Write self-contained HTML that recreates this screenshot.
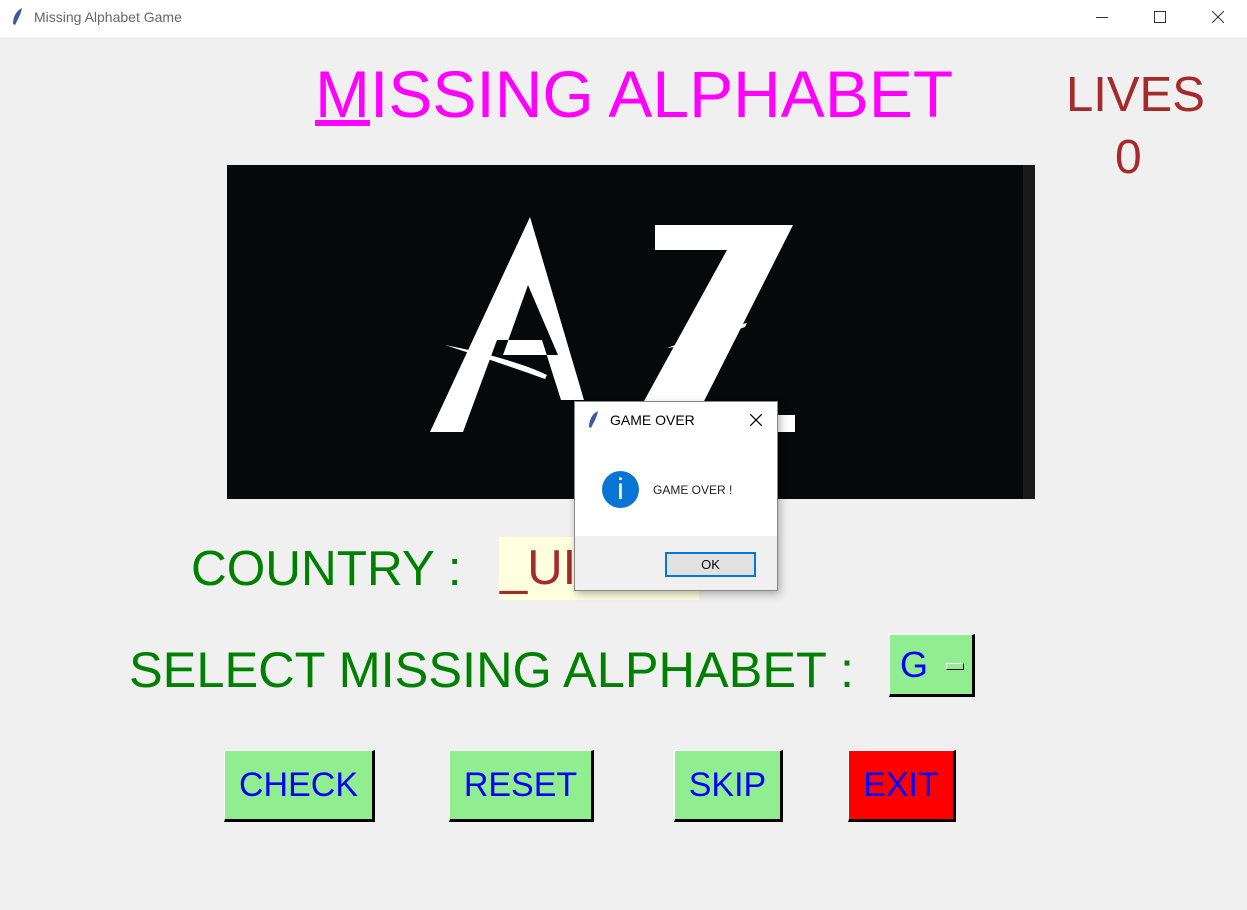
<!DOCTYPE html>
<html><head><style>
body{margin:0;width:1247px;height:910px;background:#f0f0f0;font-family:"Liberation Sans",sans-serif;position:relative;overflow:hidden}
.a{position:absolute;white-space:nowrap}
.btn{position:absolute;background:#90ee90;border:1px solid #fff;border-right:3px solid #000;border-bottom:3px solid #000;box-sizing:border-box;color:#0000ff;font-size:34px;display:flex;align-items:center;justify-content:center}
</style></head><body>
<div class="a" style="left:0;top:0;width:1247px;height:37px;background:#fff"></div>
<svg class="a" style="left:10px;top:7px" width="16" height="20"><path d="M12 1 C6 4 3 10 3 17 L5 18 C8 12 11 7 12 1Z" fill="#3a5a9a"/></svg>
<div class="a" style="left:34px;top:9px;font-size:14px;color:#666">Missing Alphabet Game</div>
<div class="a" style="left:1096px;top:17px;width:12px;height:1px;background:#333"></div>
<div class="a" style="left:1154px;top:11px;width:10px;height:10px;border:1px solid #333"></div>
<svg class="a" style="left:1212px;top:11px" width="12" height="12"><path d="M0 0L12 12M12 0L0 12" stroke="#333" stroke-width="1"/></svg>

<div class="a" style="left:315px;top:56px;font-size:66px;color:#ff00ff"><span style="text-decoration:underline;text-decoration-thickness:6px">M</span>ISSING ALPHABET</div>
<div class="a" style="left:1066px;top:67px;font-size:49px;color:#a52a2a">LIVES</div>
<div class="a" style="left:1115px;top:130px;font-size:48px;color:#a52a2a">0</div>

<svg class="a" style="left:227px;top:165px" width="808" height="334">
<rect width="808" height="334" fill="#07080a"/><rect x="796" width="12" height="334" fill="#1a1a1a"/>
<path d="M303 52 L357 235 L334 235 L315 175 L270 175 L236 267 L203 267 Z M301 120 L276 190 L331 190 Z" fill="#fff" fill-rule="evenodd"/>
<path d="M218 180 C260 188 300 200 320 210 L318 214 C290 204 255 192 218 180Z" fill="#fff"/>
<path d="M440 183 C470 172 500 162 520 158 L518 162 C495 170 465 180 440 183Z" fill="#fff"/>
<path d="M428 60 L566 60 L470 250 L568 250 L568 267 L400 267 L500 85 L428 85 Z" fill="#fff"/>
</svg>

<div class="a" style="left:191px;top:540px;font-size:49.5px;color:#008000">COUNTRY :</div>
<div class="a" style="left:499px;top:537px;width:200px;height:63px;background:#ffffe0"></div>
<div class="a" style="left:500px;top:540px;font-size:49px;color:#a52a2a">_UI</div>
<div class="a" style="left:129px;top:640px;font-size:50.5px;color:#008000">SELECT MISSING ALPHABET :</div>
<div class="btn" style="left:889px;top:634px;width:86px;height:63px;justify-content:flex-start;padding-left:10px;font-size:36px">G<span style="position:absolute;left:56px;top:28px;width:16px;height:5px;border:1px solid #fff;border-right:1px solid #000;border-bottom:1px solid #000;background:#90ee90"></span></div>

<div class="btn" style="left:224px;top:750px;width:151px;height:72px">CHECK</div>
<div class="btn" style="left:449px;top:750px;width:145px;height:72px">RESET</div>
<div class="btn" style="left:674px;top:750px;width:109px;height:72px">SKIP</div>
<div class="btn" style="left:848px;top:750px;width:108px;height:72px;background:#ff0000">EXIT</div>

<div class="a" style="left:574px;top:401px;width:202px;height:188px;background:#fff;border:1px solid #888;box-shadow:2px 3px 8px rgba(0,0,0,.3)">
<svg class="a" style="left:12px;top:8px" width="14" height="20"><path d="M11 1 C5 4 2 10 2 17 L4 18 C7 12 10 7 11 1Z" fill="#3a5a9a"/></svg>
<div class="a" style="left:35px;top:10px;font-size:14px;color:#000">GAME OVER</div>
<svg class="a" style="left:175px;top:12px" width="12" height="12"><path d="M0 0L12 12M12 0L0 12" stroke="#000" stroke-width="1.2"/></svg>
<div class="a" style="left:27px;top:69px;width:37px;height:37px;border-radius:50%;background:#0a74d4;color:#fff;font-size:30px;text-align:center;line-height:37px">i</div>
<div class="a" style="left:78px;top:81px;font-size:12px;color:#222">GAME OVER !</div>
<div class="a" style="left:0;top:134px;width:202px;height:54px;background:#f0f0f0"></div>
<div class="a" style="left:90px;top:150px;width:87px;height:21px;border:2px solid #0078d7;background:#e1e1e1;font-size:13px;text-align:center;line-height:21px">OK</div>
</div>
</body></html>
